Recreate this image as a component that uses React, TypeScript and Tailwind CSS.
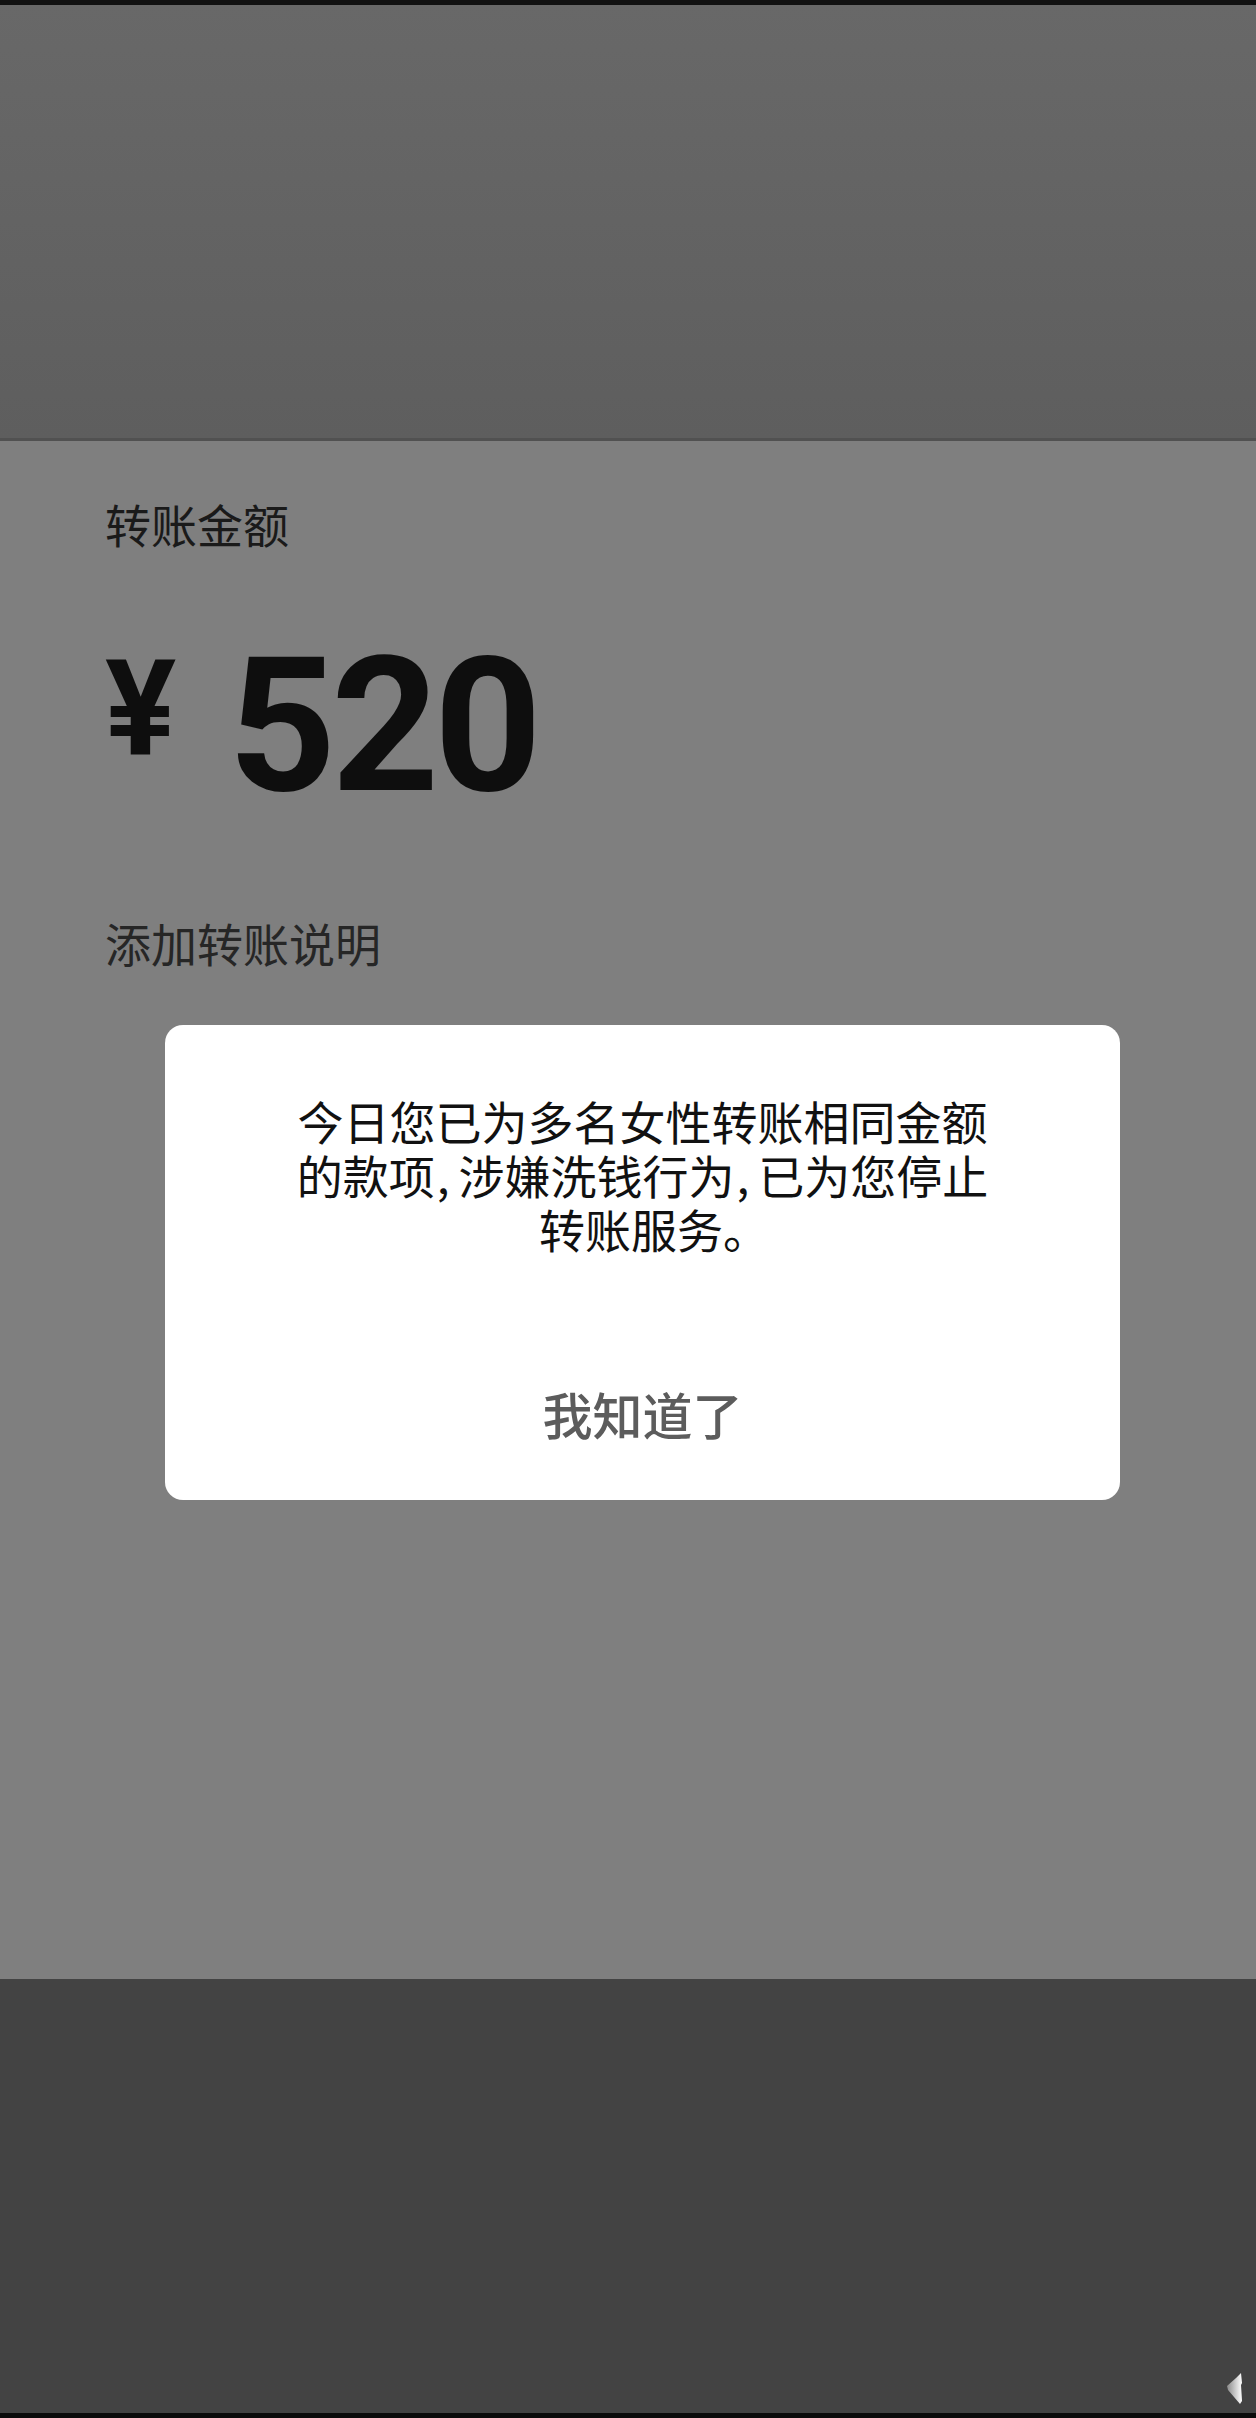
import React from "react";

const cjk = "font-['Noto_Sans_CJK_SC','Noto_Sans',sans-serif]";

function Comma() {
  return <span className="ml-[2px] mr-[9px]">,</span>;
}

export default function App() {
  return (
    <div className={`w-[1256px] h-[2418px] flex flex-col overflow-hidden ${cjk}`}>
      <div className="h-[5px] bg-[#121212]" />
      <div className="h-[433px] bg-gradient-to-b from-[#686868] to-[#5e5e5e]" />
      <div className="h-[3px] bg-[#515151]" />

      <div className="relative h-[1538px] bg-[#7f7f7f] pl-[105px] pt-[59px] flex flex-col">
        <div className="text-[46px] leading-none text-[#1a1a1a]">转账金额</div>

        <div className="mt-[86px] flex items-start text-[#0e0e0e] font-['Roboto','Liberation_Sans',sans-serif] font-bold">
          <span className="mt-[10px] text-[133px] leading-none">¥</span>
          <span className="ml-[52px] text-[188px] leading-none tracking-[-5px]">520</span>
        </div>

        <div className="mt-[99px] text-[46px] leading-none text-[#262626]">添加转账说明</div>

        <div className="absolute left-[165px] top-[584px] w-[955px] h-[475px] bg-white rounded-[18px] flex flex-col items-center pt-[68px] pb-[62px]">
          <div className="text-[46px] leading-[54px] text-[#111111] text-center">
            <div>今日您已为多名女性转账相同金额</div>
            <div>
              的款项<Comma />涉嫌洗钱行为<Comma />已为您停止
            </div>
            <div>
              转账服务<span className="mr-[-23px]">。</span>
            </div>
          </div>
          <div className="mt-[133px] text-[50px] leading-none font-medium text-[#5c5c5c]">我知道了</div>
        </div>
      </div>

      <div className="relative h-[434px] bg-[#434343]">
        <svg className="absolute left-[1226px] top-[394px]" width="18" height="32" viewBox="0 0 18 32">
          <defs>
            <linearGradient id="g" x1="0" y1="0" x2="1" y2="0">
              <stop offset="0" stopColor="#8a8a8a" />
              <stop offset="1" stopColor="#ffffff" />
            </linearGradient>
          </defs>
          <polygon points="15,0 16,10 15,12 16,28 14,31 2,17 1,13 10,5" fill="url(#g)" />
        </svg>
      </div>
      <div className="h-[5px] bg-[#0b0b0b]" />
    </div>
  );
}
